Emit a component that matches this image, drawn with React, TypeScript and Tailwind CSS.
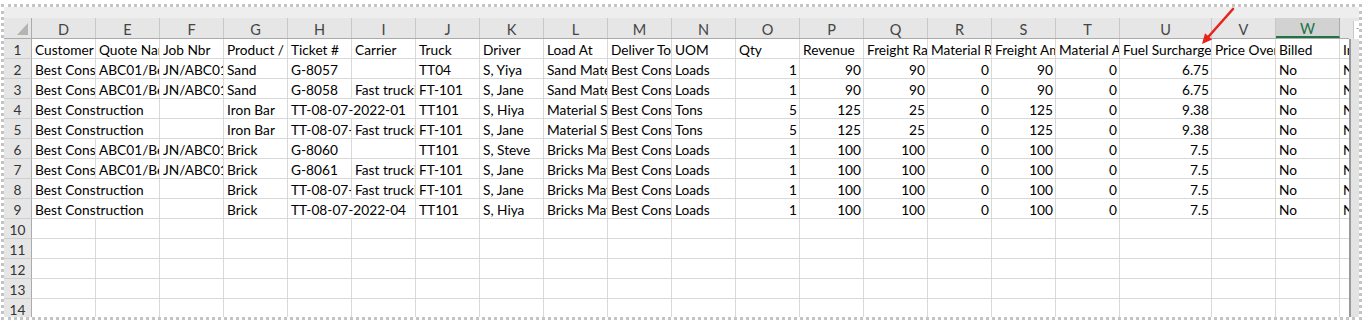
import React from 'react';

type Cell = string | number;

const COLS = ['D', 'E', 'F', 'G', 'H', 'I', 'J', 'K', 'L', 'M', 'N', 'O', 'P', 'Q', 'R', 'S', 'T', 'U', 'V', 'W', 'X'];
const WIDTHS = [64, 64, 64, 64, 64, 64, 64, 64, 64, 64, 64, 64, 64, 64, 64, 64, 64, 92, 64, 64, 64];

const widthClass: Record<number, string> = {
  64: 'w-[64px]',
  92: 'w-[92px]',
  128: 'w-[128px]',
};

const rows: Cell[][] = [
  ['Customer', 'Quote Name', 'Job Nbr', 'Product / Material', 'Ticket #', 'Carrier', 'Truck', 'Driver', 'Load At', 'Deliver To', 'UOM', 'Qty', 'Revenue', 'Freight Rate', 'Material Rate', 'Freight Amount', 'Material Amount', 'Fuel Surcharge', 'Price Override', 'Billed', 'Invoiced'],
  ['Best Construction', 'ABC01/Best Construction', 'JN/ABC01/Best', 'Sand', 'G-8057', '', 'TT04', 'S, Yiya', 'Sand Material', 'Best Construction', 'Loads', 1, 90, 90, 0, 90, 0, 6.75, '', 'No', 'No'],
  ['Best Construction', 'ABC01/Best Construction', 'JN/ABC01/Best', 'Sand', 'G-8058', 'Fast trucking', 'FT-101', 'S, Jane', 'Sand Material', 'Best Construction', 'Loads', 1, 90, 90, 0, 90, 0, 6.75, '', 'No', 'No'],
  ['Best Construction', '', '', 'Iron Bar', 'TT-08-07-2022-01', '', 'TT101', 'S, Hiya', 'Material Supplier', 'Best Construction', 'Tons', 5, 125, 25, 0, 125, 0, 9.38, '', 'No', 'No'],
  ['Best Construction', '', '', 'Iron Bar', 'TT-08-07-2022-02', 'Fast trucking', 'FT-101', 'S, Jane', 'Material Supplier', 'Best Construction', 'Tons', 5, 125, 25, 0, 125, 0, 9.38, '', 'No', 'No'],
  ['Best Construction', 'ABC01/Best Construction', 'JN/ABC01/Best', 'Brick', 'G-8060', '', 'TT101', 'S, Steve', 'Bricks Material', 'Best Construction', 'Loads', 1, 100, 100, 0, 100, 0, 7.5, '', 'No', 'No'],
  ['Best Construction', 'ABC01/Best Construction', 'JN/ABC01/Best', 'Brick', 'G-8061', 'Fast trucking', 'FT-101', 'S, Jane', 'Bricks Material', 'Best Construction', 'Loads', 1, 100, 100, 0, 100, 0, 7.5, '', 'No', 'No'],
  ['Best Construction', '', '', 'Brick', 'TT-08-07-2022-03', 'Fast trucking', 'FT-101', 'S, Jane', 'Bricks Material', 'Best Construction', 'Loads', 1, 100, 100, 0, 100, 0, 7.5, '', 'No', 'No'],
  ['Best Construction', '', '', 'Brick', 'TT-08-07-2022-04', '', 'TT101', 'S, Hiya', 'Bricks Material', 'Best Construction', 'Loads', 1, 100, 100, 0, 100, 0, 7.5, '', 'No', 'No'],
];

// text that spills over into the empty cell to its right (row index -> column indexes)
const spills: Record<number, number[]> = {
  3: [0, 4],
  4: [0],
  7: [0],
  8: [0, 4],
};

const EMPTY_ROWS = [10, 11, 12, 13, 14];

function RowNumber({ n }: { n: number }) {
  return (
    <div className="w-[28px] shrink-0 h-[20px] bg-[#e6e6e6] border-r border-[#ababab] border-b border-b-[#cfcfcf] text-center leading-[21px] text-[#333] overflow-hidden">
      {n}
    </div>
  );
}

function DataRow({ cells, rowIdx }: { cells: Cell[]; rowIdx: number }) {
  const out: React.ReactNode[] = [];
  const merge = spills[rowIdx] || [];
  let i = 0;
  while (i < cells.length) {
    const value = cells[i];
    const span = merge.includes(i) ? 2 : 1;
    const w = span === 2 ? WIDTHS[i] + WIDTHS[i + 1] : WIDTHS[i];
    const isNum = typeof value === 'number';
    out.push(
      <div
        key={i}
        className={`${widthClass[w]} shrink-0 h-[20px] border-r border-b border-[#d9d9d9] overflow-hidden whitespace-nowrap leading-[21px] ${
          isNum ? 'text-right pr-[2px]' : 'pl-[3px]'
        }`}
      >
        {value}
      </div>
    );
    i += span;
  }
  return (
    <div className="flex">
      <RowNumber n={rowIdx + 1} />
      {out}
    </div>
  );
}

function EmptyRow({ n }: { n: number }) {
  return (
    <div className="flex">
      <RowNumber n={n} />
      {WIDTHS.map((w, i) => (
        <div key={i} className={`${widthClass[w]} shrink-0 h-[20px] border-r border-b border-[#d9d9d9]`} />
      ))}
    </div>
  );
}

export default function App() {
  return (
    <div className="relative w-[1364px] h-[323px] bg-white font-['Lato',sans-serif] text-[13.7px] text-black">
      <div className="absolute left-[1px] top-[4px] w-[1361px] h-[316px] border-[3px] border-dotted border-[#c4c4c4] flex flex-col overflow-hidden">
        <div className="h-[11px] shrink-0 bg-[#eeeeee]" />
        <div className="flex flex-1 overflow-hidden">
          <div className="w-[1345px] overflow-hidden flex flex-col">
            {/* column headers */}
            <div className="flex h-[21px] shrink-0 bg-[#e6e6e6] border-b border-[#ababab]">
              <div className="w-[28px] shrink-0 border-r border-[#ababab] flex items-end justify-end pr-[3px] pb-[3px]">
                <svg width="11" height="12" viewBox="0 0 11 12">
                  <polygon points="11,0 11,12 0,12" fill="#b4b4b4" />
                </svg>
              </div>
              {COLS.map((c, i) => {
                const selected = c === 'W';
                return (
                  <div
                    key={c}
                    className={`${widthClass[WIDTHS[i]]} shrink-0 text-center text-[14.5px] border-r ${
                      selected
                        ? 'bg-[#d2d2d2] text-[#217346] border-[#ababab] border-b-2 border-b-[#217346] leading-[22px]'
                        : 'text-[#444] border-[#c8c8c8] leading-[23px]'
                    }`}
                  >
                    {c}
                  </div>
                );
              })}
            </div>
            {rows.map((r, idx) => (
              <DataRow key={idx} cells={r} rowIdx={idx} />
            ))}
            {EMPTY_ROWS.map((n) => (
              <EmptyRow key={n} n={n} />
            ))}
          </div>
          {/* scroll gutter */}
          <div className="w-[10px] shrink-0 flex flex-col">
            <div className="h-[21px] shrink-0 bg-[#e6e6e6] flex justify-end pt-[3px]">
              <div className="w-[6px] h-[18px] bg-white border-l border-[#c8c8c8] text-[8px] leading-[14px] text-[#555] text-right">-</div>
            </div>
            <div className="flex-1 bg-[#e3e3e3] border-l-2 border-[#9a9a9a]" />
          </div>
        </div>
      </div>
      {/* annotation arrow */}
      <svg className="absolute left-[1195px] top-[4px]" width="45" height="45" viewBox="0 0 45 45">
        <line x1="38" y1="5" x2="13.6" y2="32.5" stroke="#e8231b" strokeWidth="2.6" strokeLinecap="round" />
        <polygon points="7,40 17.2,35.6 10,29.3" fill="#e8231b" />
      </svg>
    </div>
  );
}
